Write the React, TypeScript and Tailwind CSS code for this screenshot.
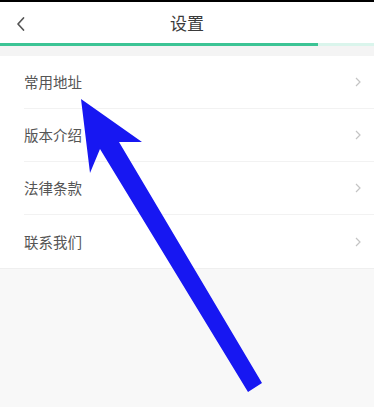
import React from 'react';

const rows = ['常用地址', '版本介绍', '法律条款', '联系我们'];

const App: React.FC = () => {
    return (
        <div
            className="relative w-[374px] h-[407px] overflow-hidden bg-[#f8f8f8]"
            style={{ fontFamily: '"Noto Sans CJK SC", "Noto Sans", sans-serif' }}
        >
            <div className="h-[2px] bg-black" />
            <div className="relative h-[41px] bg-white flex items-center justify-center">
                <svg className="absolute left-[15px] top-[14px]" width="12" height="16" viewBox="0 0 12 16">
                    <polyline points="8.5,2 3,8 8.5,14" fill="none" stroke="#555" strokeWidth="1.7" strokeLinecap="round" strokeLinejoin="round" />
                </svg>
                <span className="text-[17px] text-[#3a3a3a] leading-none">设置</span>
            </div>
            <div className="flex h-[3px]">
                <div className="w-[318px] bg-[#3cc495]" />
                <div className="flex-1 bg-[#daf5ec]" />
            </div>
            <div className="h-[10px] bg-[#f4f4f4]" />

            <div className="bg-white">
                {rows.map((label, i) => (
                    <div key={label} className="pl-6">
                        <div
                            className={`h-[53px] flex items-center justify-between pr-[12px] ${i < rows.length - 1 ? 'border-b border-[#f2f2f2]' : ''}`}
                        >
                            <span className="text-[14.5px] text-[#555]">{label}</span>
                            <svg width="8" height="12" viewBox="0 0 8 12">
                                <polyline points="2,2 6,6 2,10" fill="none" stroke="#c4c4c4" strokeWidth="1.2" />
                            </svg>
                        </div>
                    </div>
                ))}
            </div>
            <div className="h-px bg-[#efefef]" />

            <svg className="absolute left-0 top-0" width="374" height="407" viewBox="0 0 374 407">
                <polygon
                    points="81,99 142,142 119,142 262,383 248,392 100,149 90,173"
                    fill="#1717f2"
                />
            </svg>
        </div>
    );
};

export default App;
